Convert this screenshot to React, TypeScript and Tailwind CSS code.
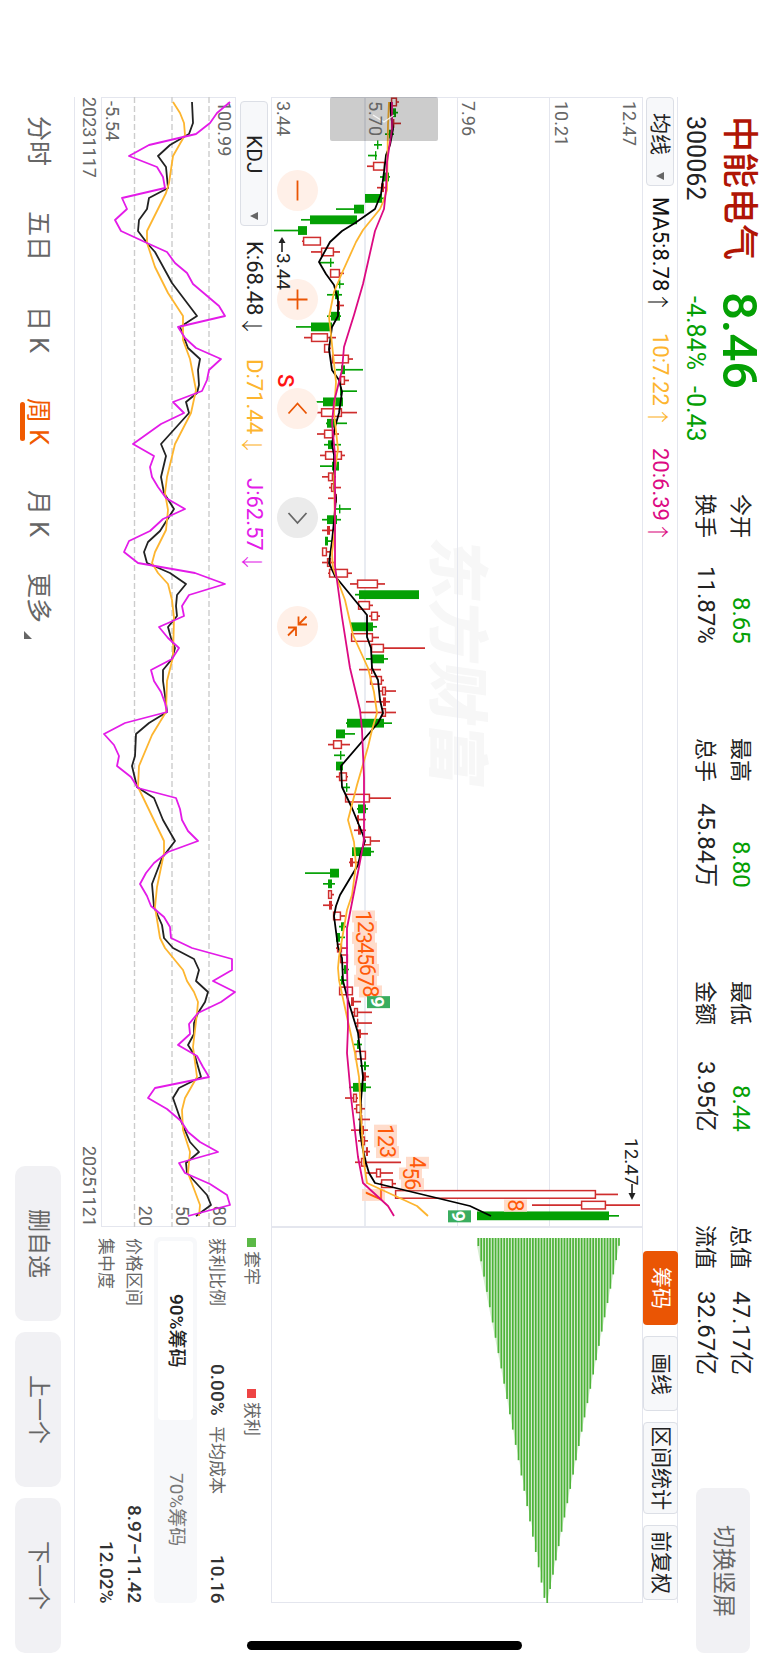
import React from "react";

type Point = [number, number];
type Candle = ["r" | "g", number, number, number, number];

const STEP = 10.71;
const FIRST = 102;
const rowY = (i: number) => FIRST + i * STEP;

// [direction, low, body start, body end, high] along the price axis
const CANDLES: Candle[] = [
  ["r", 391, 391, 397, 399], ["g", 392, 393, 396, 398], ["r", 393, 393, 394, 401], ["g", 385, 389, 392, 394],
  ["g", 374, 377, 378, 382], ["g", 368, 375, 376, 377], ["r", 367, 373, 385, 385], ["g", 380, 383, 389, 390],
  ["r", 377, 381, 384, 386], ["g", 365, 365, 382, 384], ["g", 336, 354, 364, 364], ["g", 301, 310, 357, 357],
  ["g", 274, 298, 307, 307], ["r", 302, 303, 321, 321], ["r", 311, 321, 334, 340], ["g", 320, 330, 331, 334],
  ["r", 330, 330, 340, 344], ["g", 338, 339, 340, 344], ["g", 327, 335, 339, 342], ["r", 336, 338, 340, 344],
  ["g", 327, 331, 340, 341], ["g", 296, 311, 332, 332], ["r", 304, 311, 328, 336], ["r", 324, 324, 330, 331],
  ["r", 332, 332, 349, 353], ["g", 336, 341, 345, 363], ["r", 338, 340, 345, 349], ["g", 340, 340, 341, 357],
  ["g", 316, 323, 343, 343], ["r", 317, 321, 342, 357], ["g", 326, 327, 336, 347], ["r", 317, 324, 333, 339],
  ["g", 324, 328, 333, 341], ["r", 320, 325, 342, 345], ["g", 320, 332, 339, 339], ["r", 322, 328, 333, 336],
  ["r", 329, 331, 335, 341], ["r", 328, 334, 337, 337], ["g", 335, 339, 340, 351], ["g", 322, 327, 337, 341],
  ["r", 322, 327, 330, 333], ["g", 325, 325, 328, 332], ["r", 322, 322, 327, 331], ["r", 322, 327, 331, 334],
  ["r", 328, 329, 348, 352], ["r", 350, 357, 378, 385], ["g", 355, 359, 419, 419], ["r", 358, 358, 370, 373],
  ["r", 369, 371, 378, 380], ["g", 351, 351, 373, 377], ["r", 351, 351, 373, 379], ["r", 371, 371, 384, 425],
  ["g", 366, 372, 384, 388], ["r", 359, 371, 372, 381], ["r", 370, 370, 382, 384], ["r", 379, 382, 386, 396],
  ["r", 366, 383, 386, 390], ["r", 361, 382, 386, 396], ["g", 346, 347, 384, 392], ["g", 336, 336, 345, 355],
  ["r", 328, 333, 342, 350], ["g", 334, 340, 341, 345], ["g", 336, 336, 343, 343], ["r", 336, 339, 347, 348],
  ["g", 342, 346, 347, 350], ["r", 345, 345, 370, 391], ["g", 357, 358, 366, 368], ["r", 357, 357, 359, 366],
  ["r", 354, 358, 361, 366], ["r", 363, 363, 371, 380], ["g", 352, 352, 371, 374], ["r", 349, 350, 353, 358],
  ["g", 305, 330, 339, 339], ["g", 323, 328, 332, 335], ["r", 328, 328, 332, 334], ["r", 323, 329, 332, 333],
  ["r", 333, 333, 341, 345], ["g", 339, 341, 344, 346], ["g", 336, 336, 340, 345], ["r", 336, 337, 342, 348],
  ["r", 340, 340, 348, 348], ["g", 343, 344, 347, 349], ["g", 340, 341, 343, 347], ["r", 339, 339, 353, 353],
  ["r", 351, 351, 354, 361], ["r", 352, 354, 358, 372], ["r", 356, 357, 358, 372], ["r", 358, 358, 361, 368],
  ["g", 354, 357, 359, 362], ["r", 355, 355, 366, 366], ["g", 360, 364, 366, 369], ["r", 362, 363, 366, 369],
  ["g", 349, 353, 366, 371], ["r", 345, 353, 357, 358], ["r", 354, 356, 362, 365], ["r", 358, 361, 362, 370],
  ["r", 351, 361, 364, 368], ["r", 358, 361, 365, 368], ["r", 364, 366, 368, 370], ["r", 355, 361, 366, 401],
  ["r", 366, 376, 381, 393], ["r", 380, 381, 393, 396], ["r", 395, 395, 596, 618], ["r", 532, 581, 606, 640],
  ["g", 477, 477, 609, 619],
];

const MA5: Point[] = [[390,102],[391,115],[393,129],[390,145],[386,155],[384,172],[381,194],[375,209],[355,223],[342,231],[330,242],[319,262],[326,274],[334,285],[338,300],[338,316],[332,327],[329,349],[332,370],[339,380],[342,392],[339,413],[335,427],[332,444],[334,455],[334,488],[336,498],[334,521],[332,541],[329,563],[335,576],[367,615],[367,637],[371,648],[372,668],[378,680],[380,700],[383,713],[378,723],[341,766],[342,787],[352,808],[363,835],[365,841],[361,852],[358,865],[340,895],[336,906],[334,916],[338,947],[342,958],[343,981],[348,1000],[358,1033],[363,1077],[361,1100],[360,1132],[363,1150],[366,1163],[369,1173],[375,1183],[470,1206],[491,1216]];
const MA10: Point[] = [[389,102],[388,125],[387,190],[383,202],[380,209],[363,230],[356,242],[342,273],[334,292],[329,317],[331,335],[336,382],[334,413],[338,449],[334,476],[335,529],[332,553],[333,568],[345,600],[353,635],[368,668],[374,692],[377,713],[372,730],[368,747],[357,785],[348,820],[354,842],[356,865],[352,895],[347,910],[339,957],[338,968],[339,980],[347,1017],[355,1053],[359,1077],[361,1117],[364,1163],[367,1183],[417,1206],[428,1216]];
const MA20: Point[] = [[392,102],[392,129],[387,162],[386,190],[384,209],[375,231],[368,262],[363,284],[354,315],[344,347],[342,370],[334,402],[332,423],[335,455],[335,566],[342,617],[350,668],[360,710],[362,730],[364,777],[364,840],[359,867],[347,928],[347,960],[348,1027],[347,1053],[351,1097],[358,1157],[363,1183],[388,1206],[394,1216]];

const J: Point[] = [[230,102],[217,113],[210,123],[196,134],[149,145],[129,156],[157,167],[163,177],[165,188],[122,198],[127,209],[115,220],[121,231],[147,243],[167,252],[175,263],[187,273],[193,284],[219,306],[225,316],[178,327],[185,338],[196,348],[221,359],[209,370],[207,380],[202,391],[173,402],[184,413],[161,424],[133,444],[154,456],[150,467],[152,477],[158,487],[166,498],[185,509],[163,519],[150,531],[129,541],[124,552],[138,563],[195,573],[225,584],[189,595],[182,606],[184,616],[159,627],[168,638],[179,648],[172,659],[151,670],[154,681],[161,692],[165,703],[167,712],[125,723],[104,734],[114,745],[119,756],[117,766],[131,777],[138,788],[176,798],[180,809],[182,820],[188,831],[198,841],[168,852],[154,863],[146,873],[140,884],[147,896],[151,906],[164,917],[170,927],[171,938],[192,948],[232,959],[232,970],[213,981],[235,992],[221,1002],[198,1013],[189,1024],[190,1034],[178,1045],[197,1056],[203,1067],[209,1077],[155,1088],[148,1098],[167,1109],[181,1121],[188,1132],[200,1142],[218,1152],[179,1163],[185,1173],[210,1184],[227,1195],[230,1205],[188,1216]];
const K: Point[] = [[192,102],[193,123],[189,134],[170,145],[158,156],[166,167],[168,188],[149,198],[147,209],[139,220],[138,231],[147,243],[155,252],[172,283],[197,316],[180,327],[188,348],[200,359],[198,370],[199,385],[197,393],[186,402],[189,413],[161,444],[166,456],[161,477],[164,493],[174,509],[160,531],[148,542],[144,552],[147,563],[170,573],[186,584],[177,595],[176,606],[177,616],[168,627],[171,638],[175,648],[172,659],[163,670],[163,681],[166,703],[167,712],[149,723],[136,734],[135,756],[132,766],[137,787],[154,798],[163,820],[175,841],[162,858],[152,884],[154,907],[162,925],[164,938],[173,948],[194,959],[199,970],[196,981],[208,992],[205,1002],[198,1013],[194,1023],[194,1034],[188,1045],[195,1056],[201,1077],[179,1088],[173,1098],[181,1121],[190,1142],[199,1152],[186,1163],[187,1173],[207,1195],[211,1205],[196,1216]];
const D: Point[] = [[173,102],[180,113],[184,123],[185,135],[173,156],[169,183],[166,193],[147,231],[147,243],[155,267],[168,293],[183,316],[183,340],[190,359],[196,390],[191,413],[175,444],[167,477],[165,493],[168,510],[166,530],[155,552],[152,563],[158,573],[168,584],[172,600],[174,618],[173,657],[167,681],[166,712],[152,735],[139,766],[138,787],[164,841],[164,853],[157,887],[155,907],[160,938],[165,948],[183,970],[187,981],[194,992],[198,1002],[197,1013],[193,1047],[197,1077],[185,1098],[182,1110],[183,1130],[190,1152],[188,1173],[200,1205],[199,1216]];

// [candle index, badge start, digit]
const COUNTS: [number, number, number][] = [
  [76, 352, 1], [77, 354, 2], [78, 352, 3], [79, 354, 4], [80, 354, 5], [81, 356, 6], [82, 354, 7], [83, 359, 8], [84, 367, 9],
  [96, 374, 1], [97, 374, 2], [98, 376, 3], [99, 406, 4], [100, 399, 5], [101, 401, 6], [102, 362, 7], [103, 504, 8], [104, 448, 9],
];

const CHIPS = Array.from({ length: 50 }, (_, i) => {
  const length = i < 24 ? 8 + i * 15.3 : i === 24 ? 365 : 351 - (i - 25) * 14.3;
  return { x: 477.5 + i * 2.87, length };
});

const toPoints = (p: Point[]) => p.map(([x, y]) => `${x},${y}`).join(" ");

function Line({ data, color }: { data: Point[]; color: string }) {
  return <polyline points={toPoints(data)} fill="none" stroke={color} strokeWidth="1.8" strokeLinejoin="round" />;
}

function ChartText({ x, y, size = 18, fill = "#666666", weight = 400, anchor = "start", children }: {
  x: number; y: number; size?: number; fill?: string; weight?: number; anchor?: "start" | "middle" | "end"; children: React.ReactNode;
}) {
  return (
    <text transform={`translate(${x} ${y}) rotate(90)`} fontSize={size} fill={fill} fontWeight={weight} textAnchor={anchor}>
      {children}
    </text>
  );
}

function PriceChart() {
  return (
    <svg viewBox="271 97 372 1130" className="block h-full w-full [writing-mode:horizontal-tb]" role="img" aria-label="周K">
      <g fill="#f7f7f7" fontFamily="'Noto Sans CJK SC', sans-serif" fontWeight="900" fontSize="62">
        <text transform="translate(435 536) rotate(90) skewX(-8)">东方财富</text>
      </g>
      <g stroke="#e4e6ee" strokeWidth="1" fill="none">
        <line x1="365" x2="365" y1="97" y2="1227" strokeWidth="2" stroke="#e9ecf2" />
        <line x1="457.5" x2="457.5" y1="97" y2="1227" />
        <line x1="549.5" x2="549.5" y1="97" y2="1227" />
        <rect x="271.5" y="97.5" width="371" height="1129" />
      </g>
      {CANDLES.map(([dir, low, start, end, high], i) => {
        const y = rowY(i);
        const up = dir === "r";
        const color = up ? "#cf2e2e" : "#04a004";
        const wide = end - start > 3;
        return (
          <g key={i}>
            {low < start && <line x1={low} x2={start} y1={y} y2={y} stroke={color} strokeWidth="1.7" />}
            {high > end && <line x1={end} x2={high} y1={y} y2={y} stroke={color} strokeWidth="1.7" />}
            {up && wide ? (
              <rect x={start + 0.6} y={y - 3.8} width={end - start - 1.2} height="7.6" fill="#ffffff" stroke={color} strokeWidth="1.5" />
            ) : (
              <rect x={start} y={y - 4.4} width={Math.max(end - start, 1.4)} height="8.8" fill={color} />
            )}
          </g>
        );
      })}
      {COUNTS.map(([i, x, n]) => (
        <g key={i}>
          <rect x={x} y={rowY(i) - 5.5} width="23" height="12" fill={n === 9 ? "#3aad5f" : "#ffdccb"} />
          <ChartText x={x + 4} y={rowY(i) + 0.4} size={n === 9 ? 19 : 22} fill={n === 9 ? "#ffffff" : "#ff5a0a"} weight={n === 9 ? 700 : 400} anchor="middle">
            {n}
          </ChartText>
        </g>
      ))}
      <Line data={MA5} color="#000000" />
      <Line data={MA10} color="#fdb52f" />
      <Line data={MA20} color="#dc0a82" />
      <rect x="330" y="97" width="108" height="44" rx="2" fill="#000000" fillOpacity="0.2" />
      <path d="M373 115 L384 122 L394 115" fill="none" stroke="#ffffff" strokeOpacity="0.8" strokeWidth="1.4" />
      <ChartText x={277} y={101}>3.44</ChartText>
      <ChartText x={369} y={101}>5.70</ChartText>
      <ChartText x={462} y={101}>7.96</ChartText>
      <ChartText x={555} y={101}>10.21</ChartText>
      <ChartText x={623} y={101}>12.47</ChartText>
      <ChartText x={625} y={1138} size={19} fill="#222222">12.47</ChartText>
      <path d="M632 1184 V1195" stroke="#222222" strokeWidth="1.6" />
      <path d="M628.5 1193 L635.5 1193 L632 1200 Z" fill="#222222" />
      <path d="M282 252 V242" stroke="#222222" strokeWidth="1.6" />
      <path d="M278.5 243 L285.5 243 L282 237 Z" fill="#222222" />
    </svg>
  );
}

function KdjChart() {
  return (
    <svg viewBox="101 97 135 1130" className="block h-full w-full [writing-mode:horizontal-tb]" role="img" aria-label="KDJ">
      <rect x="101.5" y="97.5" width="134" height="1129" fill="none" stroke="#e4e6ee" />
      <g stroke="#cccccc" strokeWidth="1.4" strokeDasharray="6 3">
        <line x1="134.5" x2="134.5" y1="97" y2="1227" />
        <line x1="172" x2="172" y1="97" y2="1227" />
        <line x1="209" x2="209" y1="97" y2="1227" />
      </g>
      <ChartText x={218} y={101}>100.99</ChartText>
      <ChartText x={106} y={101}>-5.54</ChartText>
      <ChartText x={139} y={1226} anchor="end">20</ChartText>
      <ChartText x={176} y={1226} anchor="end">50</ChartText>
      <ChartText x={213} y={1226} anchor="end">80</ChartText>
      <Line data={K} color="#222222" />
      <Line data={D} color="#fdb52f" />
      <Line data={J} color="#e31be8" />
    </svg>
  );
}

function ChipChart() {
  return (
    <svg viewBox="271 1227 372 376" className="block h-full w-full" role="img" aria-label="筹码">
      <rect x="271.5" y="1227.5" width="371" height="375" fill="none" stroke="#e4e6ee" />
      <polygon points="477,1238 619,1238 619,1246 547,1603 477,1246" fill="#5bb946" fillOpacity="0.25" />
      {CHIPS.map(({ x, length }) => (
        <rect key={x} x={x} y="1238" width="1.7" height={length} fill="#4db338" />
      ))}
    </svg>
  );
}

const SIDEWAYS = "[writing-mode:vertical-rl] [text-orientation:sideways]";

function Picker({ label, option, box, pad }: { label: string; option: string; box: string; pad: string }) {
  return (
    <div className={`relative w-7 shrink-0 ${box}`}>
      <select
        aria-label={label}
        className={`${SIDEWAYS} ${pad} h-full w-full appearance-none rounded border border-[#dcdfe6] bg-[#f7f8fa] text-[21px] leading-[26px] text-[#222]`}
      >
        <option>{option}</option>
      </select>
      <svg viewBox="0 0 8 8" className="pointer-events-none absolute bottom-1.5 left-2.5 size-2">
        <path d="M8 0 V8 L0 4 Z" fill="#666666" />
      </svg>
    </div>
  );
}

function Reading({ text, arrow, className }: { text: string; arrow: "↑" | "↓"; className: string }) {
  return (
    <span className={`flex items-center text-[22px] leading-7 whitespace-nowrap ${className}`}>
      {text}
      <span className="h-4 font-['Noto_Sans_CJK_SC'] font-light">{arrow}</span>
    </span>
  );
}

const STATS = [
  [["今开", "8.65", true], ["换手", "11.87%", false]],
  [["最高", "8.80", true], ["总手", "45.84万", false]],
  [["最低", "8.44", true], ["金额", "3.95亿", false]],
  [["总值", "47.17亿", false], ["流值", "32.67亿", false]],
] as const;

function Header() {
  return (
    <header className="flex w-[90px] shrink-0 pt-[116px] pb-3">
      <div className="flex h-[378px] shrink-0 flex-col gap-[7px] pr-[6px]">
        <div className="flex gap-8 leading-[46px]">
          <h1 className="text-4xl leading-[46px] font-medium whitespace-nowrap text-[#b01505]">中能电气</h1>
          <span className="text-[49px] leading-[46px] font-medium text-[#04a004]">8.46</span>
        </div>
        <div className="flex text-[25px] leading-7 whitespace-nowrap">
          <span className="h-[180px] text-[#222]">300062</span>
          <span className="text-[#04a004]">-4.84%</span>
          <span className="mt-4 text-[#04a004]">-0.43</span>
        </div>
      </div>
      <div className="flex flex-1 justify-between pr-[10px]">
        {STATS.map((rows) => (
          <dl key={rows[0][0]} className="flex h-[150px] flex-col text-2xl leading-[35px] whitespace-nowrap text-[#222]">
            {rows.map(([label, value, green]) => (
              <div key={label} className="flex justify-between">
                <dt className="text-[22px]">{label}</dt>
                <dd className={green ? "text-[#04a004]" : "text-[#222]"}>{value}</dd>
              </div>
            ))}
          </dl>
        ))}
      </div>
      <button className={`${SIDEWAYS} mt-[113px] mr-[18px] h-[165px] w-[54px] shrink-0 rounded-lg bg-[#f1f1f4] text-[23px] text-[#666]`}>
        切换竖屏
      </button>
    </header>
  );
}

const TOOL = `${SIDEWAYS} shrink-0 rounded border border-[#dcdfe6] bg-[#f7f8fa] text-[21px] text-[#222]`;

function Toolbar() {
  return (
    <div className="flex w-[35px] shrink-0 items-center border-r border-[#e4e6ee]">
      <Picker label="均线" option="均线" box="h-[89px]" pad="pt-[15px]" />
      <div className="flex flex-1 gap-[26px] pt-[11px]">
        <Reading text="MA5:8.78" arrow="↑" className="text-[#111]" />
        <Reading text="10:7.22" arrow="↑" className="text-[#fdb52f]" />
        <Reading text="20:6.39" arrow="↑" className="text-[#dc0a82]" />
      </div>
      <div className="flex h-[352px] gap-[11px]">
        <button className={`${SIDEWAYS} h-[74px] w-[35px] shrink-0 rounded bg-[#ea5504] text-[21px] text-white`}>筹码</button>
        <button className={`${TOOL} h-[75px] w-[35px]`}>画线</button>
        <button className={`${TOOL} h-[92px] w-[35px]`}>区间统计</button>
        <button className={`${TOOL} h-[75px] w-[35px]`}>前复权</button>
      </div>
    </div>
  );
}

const ICONS = [
  { name: "缩小", tone: "bg-[#fff0e8] text-[#ea5504]", d: "M20.5 10.5 V30.5" },
  { name: "放大", tone: "bg-[#fff0e8] text-[#ea5504]", d: "M20.5 10.5 V30.5 M10.5 20.5 H30.5" },
  { name: "左移", tone: "bg-[#fff0e8] text-[#ea5504]", d: "M11.5 25.5 L20.5 15.5 L29.5 25.5" },
  { name: "右移", tone: "bg-[#ebebeb] text-[#666666]", d: "M11.5 16 L20.5 26 L29.5 16" },
  { name: "收起", tone: "bg-[#fff0e8] text-[#ea5504]", d: "M21.5 10.5 V18.5 H30 M21.5 18.5 L29.5 10.5 M11 21.5 H19 V30 M19 21.5 L11 29.5" },
];

function ChartButtons() {
  return (
    <div className="absolute top-[73px] left-[6px] flex gap-[68px]">
      {ICONS.map(({ name, tone, d }) => (
        <button key={name} aria-label={name} className={`size-[41px] rounded-full ${tone}`}>
          <svg viewBox="0 0 41 41" className="size-[41px]">
            <path d={d} fill="none" stroke="currentColor" strokeWidth="1.8" />
          </svg>
        </button>
      ))}
    </div>
  );
}

function Charts() {
  return (
    <section className="flex flex-1 flex-col">
      <div className="relative w-[372px] shrink-0">
        <PriceChart />
        <ChartButtons />
        <span className="absolute top-[156px] left-1 text-[19px] leading-4 text-[#222]">3.44</span>
        <span className="absolute top-[277px] left-1 text-[22px] leading-5 font-medium text-[#ff1414]">S</span>
      </div>
      <div className="flex w-[35px] shrink-0 items-center pt-1">
        <Picker label="指标" option="KDJ" box="h-[125px]" pad="pt-[33px]" />
        <div className="flex gap-7 pt-[15px]">
          <Reading text="K:68.48" arrow="↓" className="text-[#222]" />
          <Reading text="D:71.44" arrow="↓" className="text-[#fdb52f]" />
          <Reading text="J:62.57" arrow="↓" className="text-[#e31be8]" />
        </div>
      </div>
      <div className="w-[135px] shrink-0">
        <KdjChart />
      </div>
      <div className="flex w-[26px] shrink-0 justify-between text-lg leading-[24px] text-[#666]">
        <span>20231117</span>
        <span>20251121</span>
      </div>
    </section>
  );
}

function ChipPanel() {
  return (
    <aside className="flex h-[376px] shrink-0 flex-col">
      <div className="w-[372px] shrink-0">
        <ChipChart />
      </div>
      <div className="flex w-[35px] shrink-0 items-center pt-[11px] pr-1 text-[17px] text-[#666]">
        <span className="flex h-[151px] items-center gap-1">
          <i className="size-[9px] bg-[#5bb946]" />套牢
        </span>
        <span className="flex items-center gap-1">
          <i className="size-[9px] bg-[#ee4444]" />获利
        </span>
      </div>
      <div className="flex w-[39px] shrink-0 items-center pt-[11px] text-[17px] whitespace-nowrap text-[#666]">
        <span className="flex h-[178px] items-center justify-between">
          获利比例<b className="text-[19px] font-medium text-[#333]">0.00%</b>
        </span>
        <span className="flex flex-1 items-center justify-between pt-2.5">
          平均成本<b className="text-[19px] font-medium text-[#333]">10.16</b>
        </span>
      </div>
      <div className="mt-[10px] flex w-[43px] shrink-0 rounded-md bg-[#f7f8fa] p-1">
        <button className={`${SIDEWAYS} flex-1 rounded bg-white text-[19px] font-medium text-[#222]`}>90%筹码</button>
        <button className={`${SIDEWAYS} flex-1 text-[19px] text-[#777]`}>70%筹码</button>
      </div>
      <div className="flex flex-col pt-[11px] pr-1.5 text-[17px] leading-7 text-[#666]">
        <div className="flex justify-between">
          价格区间<b className="text-[19px] font-medium text-[#333]">8.97–11.42</b>
        </div>
        <div className="flex justify-between">
          集中度<b className="text-[19px] font-medium text-[#333]">12.02%</b>
        </div>
      </div>
    </aside>
  );
}

const TABS = ["分时", "五日", "日 K", "周 K", "月 K"];
const ACTIVE_TAB = "周 K";
const NAV_BUTTON = `${SIDEWAYS} h-[155px] w-[46px] rounded-[10px] bg-[#f1f1f4] text-[23px] text-[#666]`;

function BottomBar() {
  return (
    <nav className="flex w-[74px] shrink-0 items-center justify-between pt-[116px] pb-3 pl-0.5">
      <div className="flex gap-9 text-[25px] leading-9 whitespace-nowrap text-[#666]">
        <div className="flex gap-[45px]">
          {TABS.map((tab) => (
            <a key={tab} href="#" className={tab === ACTIVE_TAB ? "relative text-[#f05a00]" : ""}>
              {tab}
              {tab === ACTIVE_TAB && <i className="absolute top-1 bottom-1 left-0 w-[5px] rounded-full bg-[#f05a00]" />}
            </a>
          ))}
        </div>
        <a href="#" className="flex gap-2">
          更多
          <svg viewBox="0 0 8 8" className="ml-1 size-2 self-end">
            <path d="M0 0 V8 H8 Z" fill="#666666" />
          </svg>
        </a>
      </div>
      <div className="flex gap-[11px]">
        <button className={NAV_BUTTON}>删自选</button>
        <button className={NAV_BUTTON}>上一个</button>
        <button className={NAV_BUTTON}>下一个</button>
      </div>
    </nav>
  );
}

export default function App() {
  return (
    <div className="relative flex h-screen min-h-[1500px] w-full flex-col bg-white font-[Roboto,'Noto_Sans_CJK_SC',sans-serif] [text-orientation:sideways] [writing-mode:vertical-rl]">
      <Header />
      <main className="mt-[97px] mb-[62px] flex shrink-0 flex-col border-l border-[#e4e6ee]">
        <Toolbar />
        <div className="flex flex-1">
          <Charts />
          <ChipPanel />
        </div>
      </main>
      <BottomBar />
      <div className="absolute bottom-[15px] left-[247px] h-[9px] w-[275px] rounded-full bg-black" />
    </div>
  );
}
